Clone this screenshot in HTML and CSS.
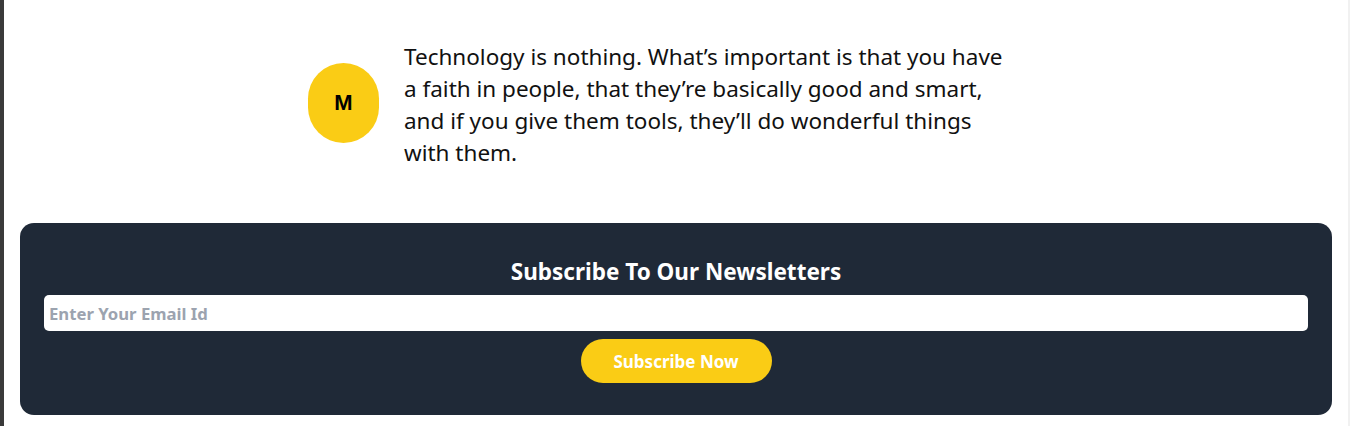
FILE: index.html
```html
<!DOCTYPE html>
<html lang="en">
<head>
<meta charset="utf-8">
<title>Newsletter</title>
<link rel="stylesheet" href="styles.css">
</head>
<body>
<div class="page">
  <section class="testimonial">
    <div class="avatar">M</div>
    <p class="quote">Technology is nothing. What’s important is that you have a faith in people, that they’re basically good and smart, and if you give them tools, they’ll do wonderful things with them.</p>
  </section>
  <section class="newsletter">
    <h2 class="newsletter-title">Subscribe To Our Newsletters</h2>
    <input class="email-input" type="email" placeholder="Enter Your Email Id">
    <button class="subscribe-btn" type="button">Subscribe Now</button>
  </section>
</div>
</body>
</html>
```

FILE: styles.css
```css
html, body {
  margin: 0;
  padding: 0;
  height: 100%;
}
body {
  background: #ffffff;
  font-family: "Noto Sans", "Open Sans", sans-serif;
  border-left: 4px solid #3a3a3a;
  border-right: 2px solid #f1f1f1;
  box-sizing: border-box;
  overflow: hidden;
}
.page {
  display: flex;
  flex-direction: column;
}
.testimonial {
  display: flex;
  align-items: center;
  gap: 25px;
  padding: 41px 0 0 304px;
}
.avatar {
  flex: none;
  width: 71px;
  height: 80px;
  margin-bottom: 4px;
  border-radius: 9999px;
  background: #facc15;
  display: flex;
  align-items: center;
  justify-content: center;
  font-family: "Liberation Sans", Arial, sans-serif;
  font-weight: 700;
  font-size: 22px;
  color: #000;
}
.quote {
  margin: 0;
  width: 602px;
  font-size: 22.5px;
  line-height: 32px;
  color: #111111;
}
.newsletter {
  margin: 54px 16px 0;
  background: #1f2937;
  border-radius: 14px;
  padding: 34px 24px 32px;
  display: flex;
  flex-direction: column;
  align-items: center;
}
.newsletter-title {
  margin: 0 0 8px;
  font-size: 22.5px;
  line-height: 30px;
  font-weight: 700;
  color: #ffffff;
}
.email-input {
  box-sizing: border-box;
  width: 100%;
  height: 36px;
  border: none;
  border-radius: 5px;
  padding: 0 5px;
  font-family: inherit;
  font-size: 16.7px;
  font-weight: 700;
  color: #111;
  background: #fff;
  outline: none;
}
.email-input::placeholder {
  color: #9ca3af;
  opacity: 1;
}
.subscribe-btn {
  margin-top: 8px;
  width: 191px;
  height: 44px;
  border: none;
  border-radius: 9999px;
  background: #facc15;
  color: #ffffff;
  font-family: inherit;
  font-size: 17px;
  font-weight: 700;
  cursor: pointer;
}
```
